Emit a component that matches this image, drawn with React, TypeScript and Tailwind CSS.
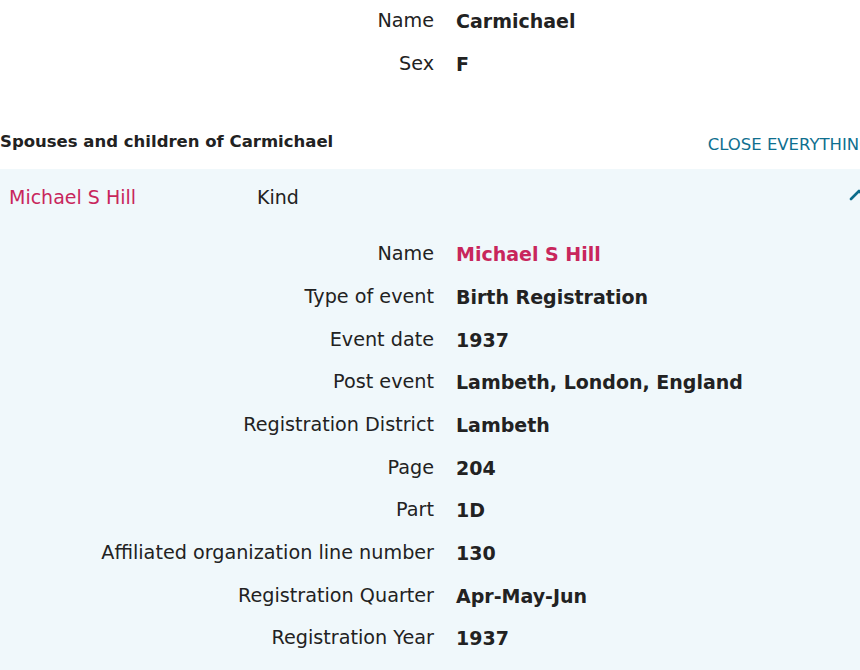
const person = [
  { label: 'Name', value: 'Carmichael' },
  { label: 'Sex', value: 'F' },
]

const details = [
  { label: 'Name', value: 'Michael S Hill', link: true },
  { label: 'Type of event', value: 'Birth Registration' },
  { label: 'Event date', value: '1937' },
  { label: 'Post event', value: 'Lambeth, London, England' },
  { label: 'Registration District', value: 'Lambeth' },
  { label: 'Page', value: '204' },
  { label: 'Part', value: '1D' },
  { label: 'Affiliated organization line number', value: '130' },
  { label: 'Registration Quarter', value: 'Apr-May-Jun' },
  { label: 'Registration Year', value: '1937' },
]

function FactRow({ label, value, link }: { label: string; value: string; link?: boolean }) {
  return (
    <div className="flex h-[42.67px] items-center leading-[42.67px]">
      <div className="w-[434px] shrink-0 text-right text-[19.2px] text-[#222]">{label}</div>
      <div className={`ml-[22px] font-bold ${link ? 'text-[#c8265c]' : 'text-[#222]'}`}>{value}</div>
    </div>
  )
}

export default function App() {
  return (
    <div
      className="h-[670px] w-[860px] overflow-hidden bg-white text-[19px]"
      style={{ fontFamily: '"DejaVu Sans", Verdana, sans-serif' }}
    >
      <div className="w-[880px]">
        <div>
          {person.map(p => (
            <FactRow key={p.label} label={p.label} value={p.value} />
          ))}
        </div>

        <div className="mt-[45px] mb-[15px] flex h-[24px] items-start justify-between pr-[8px] leading-[24px]">
          <h2 className="text-[16.5px] font-bold text-[#222]">Spouses and children of Carmichael</h2>
          <button className="mt-[3px] text-[16.5px] text-[#0f6f8f]">CLOSE EVERYTHING</button>
        </div>

        <div className="bg-[#f0f8fb] pt-[7px] pb-[40px]">
          <div className="flex h-[43px] items-start leading-[43px]">
            <span className="w-[257px] shrink-0 pl-[9px] text-[#c8265c]">Michael S Hill</span>
            <span className="text-[#222]">Kind</span>
            <svg className="ml-auto mr-[11px] mt-[13px]" width="20" height="12" viewBox="0 0 20 12" fill="none">
              <polyline points="2,10 10,2 18,10" stroke="#0b6b8a" strokeWidth="2.6" strokeLinecap="round" strokeLinejoin="round" />
            </svg>
          </div>
          <div className="mt-[14px]">
            {details.map(d => (
              <FactRow key={d.label} label={d.label} value={d.value} link={d.link} />
            ))}
          </div>
        </div>
      </div>
    </div>
  )
}
